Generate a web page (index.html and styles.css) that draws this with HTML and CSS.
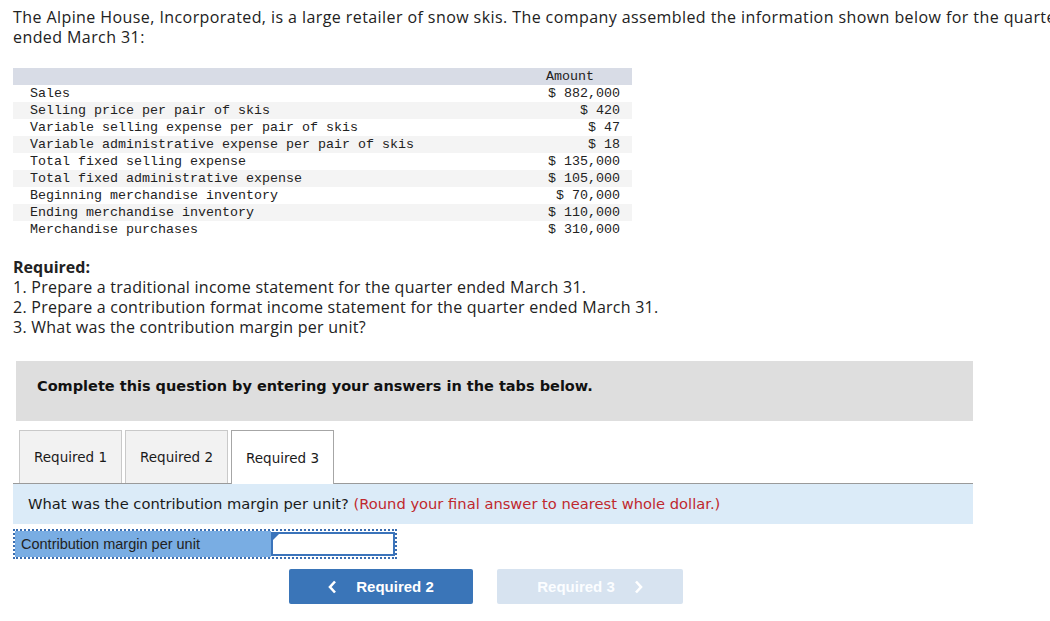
FILE: index.html
```html
<!DOCTYPE html>
<html>
<head>
<meta charset="utf-8">
<link rel="stylesheet" href="styles.css">
</head>
<body>
<div class="page">
  <p class="intro">The Alpine House, Incorporated, is a large retailer of snow skis. The company assembled the information shown below for the quarter ended March 31:</p>

  <table class="data">
    <thead>
      <tr><th class="lbl"></th><th class="amt">Amount</th></tr>
    </thead>
    <tbody>
      <tr><td class="lbl">Sales</td><td class="amt">$ 882,000</td></tr>
      <tr class="alt"><td class="lbl">Selling price per pair of skis</td><td class="amt">$ 420</td></tr>
      <tr><td class="lbl">Variable selling expense per pair of skis</td><td class="amt">$ 47</td></tr>
      <tr class="alt"><td class="lbl">Variable administrative expense per pair of skis</td><td class="amt">$ 18</td></tr>
      <tr><td class="lbl">Total fixed selling expense</td><td class="amt">$ 135,000</td></tr>
      <tr class="alt"><td class="lbl">Total fixed administrative expense</td><td class="amt">$ 105,000</td></tr>
      <tr><td class="lbl">Beginning merchandise inventory</td><td class="amt">$ 70,000</td></tr>
      <tr class="alt"><td class="lbl">Ending merchandise inventory</td><td class="amt">$ 110,000</td></tr>
      <tr><td class="lbl">Merchandise purchases</td><td class="amt">$ 310,000</td></tr>
    </tbody>
  </table>

  <div class="required">
    <div class="req-title">Required:</div>
    <div>1. Prepare a traditional income statement for the quarter ended March 31.</div>
    <div>2. Prepare a contribution format income statement for the quarter ended March 31.</div>
    <div>3. What was the contribution margin per unit?</div>
  </div>

  <div class="notice">Complete this question by entering your answers in the tabs below.</div>

  <div class="tabs">
    <div class="tab">Required 1</div>
    <div class="tab">Required 2</div>
    <div class="tab active">Required 3</div>
  </div>

  <div class="question">What was the contribution margin per unit? <span class="hint">(Round your final answer to nearest whole dollar.)</span></div>

  <div class="answer">
    <div class="answer-label">Contribution margin per unit</div>
    <div class="answer-input"><span class="corner"></span></div>
  </div>

  <div class="nav">
    <button class="btn prev"><svg class="chev" width="9" height="14" viewBox="0 0 9 14"><polyline points="7,1.5 2,7 7,12.5" fill="none" stroke="#fff" stroke-width="2.6"/></svg><span>Required 2</span></button>
    <button class="btn next"><span>Required 3</span><svg class="chev" width="9" height="14" viewBox="0 0 9 14"><polyline points="2,1.5 7,7 2,12.5" fill="none" stroke="#fff" stroke-width="2.6"/></svg></button>
  </div>
</div>
</body>
</html>
```

FILE: styles.css
```css
html, body {
  margin: 0;
  padding: 0;
  background: #fff;
  overflow: hidden;
}

.page {
  padding: 7px 0 0 13px;
  font-family: "Open Sans", "Liberation Sans", sans-serif;
  color: #222;
}

.intro {
  margin: 0;
  width: 1080px;
  font-size: 16px;
  letter-spacing: 0.42px;
  line-height: 20px;
}

.data {
  margin-top: 21px;
  border-collapse: collapse;
  width: 619px;
  font-family: "Liberation Mono", monospace;
  font-size: 13.33px;
  color: #222;
}

.data th,
.data td {
  padding: 0;
  height: 17px;
  line-height: 17px;
  font-weight: normal;
}

.data thead tr {
  background: #d8dce6;
}

.data .lbl {
  text-align: left;
  padding-left: 17px;
}

.data .amt {
  text-align: right;
  width: 100px;
  padding-right: 12px;
}

.data th.amt {
  text-align: center;
}

.data tr.alt {
  background: #f4f4f4;
}

.required {
  margin-top: 19px;
  font-size: 16px;
  letter-spacing: 0.25px;
  line-height: 20px;
}

.req-title {
  font-weight: bold;
  letter-spacing: 0;
}

.notice {
  margin: 24px 0 0 3px;
  width: 936px;
  height: 60px;
  padding-left: 21px;
  background: #dedede;
  font-family: "DejaVu Sans", sans-serif;
  font-weight: bold;
  font-size: 14.5px;
  line-height: 50px;
  color: #111;
  box-sizing: content-box;
}

.tabs {
  display: flex;
  gap: 3px;
  margin: 9px 0 0 6px;
  height: 53px;
}

.tab {
  width: 101px;
  height: 52px;
  border: 1px solid #c9c9c9;
  border-bottom: none;
  background: #f2f2f2;
  font-family: "DejaVu Sans", sans-serif;
  font-size: 13.5px;
  color: #1a1a1a;
  display: flex;
  align-items: center;
  justify-content: center;
}

.tab.active {
  background: #fff;
  border-color: #a6a6a6;
  height: 53px;
  position: relative;
  z-index: 1;
}

.question {
  width: 945px;
  height: 40px;
  padding-left: 15px;
  border-top: 1px solid #9a9a9a;
  background: #dbebf8;
  font-family: "DejaVu Sans", sans-serif;
  font-size: 14.7px;
  line-height: 40px;
  color: #1a1a1a;
}

.hint {
  color: #c0282e;
}

.answer {
  margin-top: 5px;
  display: flex;
  width: 380px;
  height: 26px;
  border: 2px dotted #3a6db0;
}

.answer-label {
  width: 250px;
  background: #79ade3;
  font-family: "Liberation Sans", sans-serif;
  font-size: 14.5px;
  line-height: 26px;
  padding-left: 6px;
  color: #222;
}

.answer-input {
  flex: 1;
  margin: 1px 0;
  background: #fff;
  border: 2px solid #3b74bb;
  position: relative;
}

.corner {
  position: absolute;
  left: 0;
  top: 0;
  width: 0;
  height: 0;
  border-top: 6px solid #3b74bb;
  border-right: 6px solid transparent;
}

.nav {
  display: flex;
  gap: 24px;
  margin: 10px 0 0 276px;
}

.btn {
  width: 184px;
  height: 35px;
  border: none;
  border-radius: 2px;
  display: flex;
  align-items: center;
  justify-content: center;
  gap: 19px;
  font-family: "Liberation Sans", sans-serif;
  font-weight: bold;
  font-size: 15px;
  color: #fff;
  padding: 0;
}

.btn.prev {
  background: #3a75b8;
}

.btn.next {
  width: 186px;
  background: #d7e3f0;
  color: #fbfdff;
}
```
